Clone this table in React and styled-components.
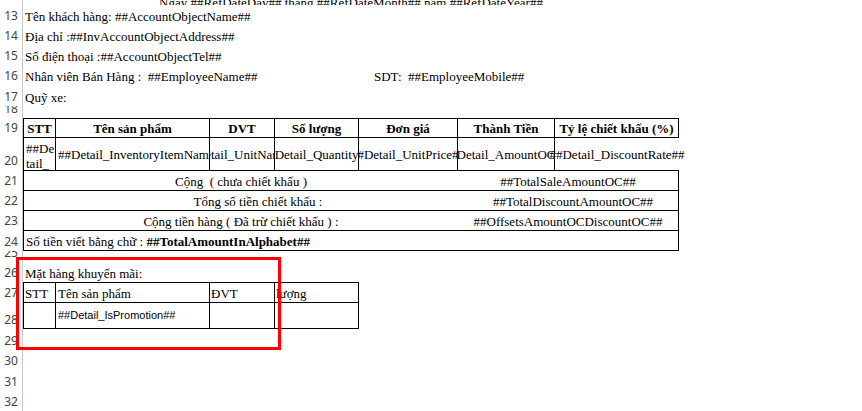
import styled, { createGlobalStyle } from 'styled-components';

const GlobalStyle = createGlobalStyle`
  html, body {
    margin: 0;
    padding: 0;
    background: #fff;
    overflow: hidden;
  }
  body {
    font-family: "Liberation Serif", "Times New Roman", serif;
    font-size: 13px;
    color: #000;
  }
`;

// row header + columns A..G + the rest of the sheet
const COLUMNS = '23px 33px 154px 65px 84px 99px 97px 124px 1fr';
const LINE = '1px solid #000';

const Sheet = styled.div`
  position: relative;
  width: 862px;
  height: 411px;
  overflow: hidden;
`;

const Row = styled.div`
  display: grid;
  grid-template-columns: ${COLUMNS};
  grid-template-rows: ${(p) => p.$h}px;
  height: ${(p) => p.$h}px;
`;

const RowHead = styled.div`
  grid-column: 1;
  display: flex;
  align-items: flex-end;
  justify-content: center;
  overflow: hidden;
  border-right: 1px solid #c8c8c8;
  padding-bottom: 1px;
  font-family: "Noto Sans", "DejaVu Sans", sans-serif;
  font-size: 12px;
  line-height: 16px;
  color: #444;
`;

const Cell = styled.div`
  grid-column: ${(p) => p.$col} / ${(p) => (p.$span ? `span ${p.$span}` : '-1')};
  display: flex;
  align-items: ${(p) => p.$v || 'flex-end'};
  justify-content: ${(p) => p.$align || 'flex-start'};
  box-sizing: border-box;
  min-width: 0;
  padding: 0 2px ${(p) => (p.$v === 'center' ? 0 : 1)}px ${(p) => p.$indent ?? 2}px;
  line-height: ${(p) => p.$lh || 15}px;
  white-space: pre;
  overflow: ${(p) => (p.$clip ? 'hidden' : 'visible')};
  font-weight: ${(p) => (p.$bold ? 700 : 400)};
  border-top: ${(p) => (p.$t ? LINE : 'none')};
  border-right: ${(p) => (p.$r ? LINE : 'none')};
  border-bottom: ${(p) => (p.$b ? LINE : 'none')};
  border-left: ${(p) => (p.$l ? LINE : 'none')};
`;

const TitleCell = styled(Cell)`
  padding-bottom: 0;
`;

// row 12 is scrolled almost out of view: only the foot of its text shows
const TitleText = styled.span`
  margin-bottom: -3px;
`;

const WrapCell = styled(Cell)`
  align-items: flex-start;
  padding-top: 3px;
  padding-right: 0;
  white-space: normal;
  word-break: break-all;
`;

const Sans = styled.span`
  font-family: "Liberation Sans", Arial, sans-serif;
  font-size: 11px;
`;

const Strong = styled.span`
  font-weight: 700;
`;

const Highlight = styled.div`
  position: absolute;
  left: 16px;
  top: 257px;
  width: 265px;
  height: 93px;
  box-sizing: border-box;
  border: 3px solid #ff0000;
  pointer-events: none;
`;

const headers = ['STT', 'Tên sản phẩm', 'DVT', 'Số lượng', 'Đơn giá', 'Thành Tiền', 'Tỷ lệ chiết khấu (%)'];

const details = [
  { text: '##Detail_InventoryItemName##', align: 'flex-start' },
  { text: '##Detail_UnitName##', align: 'center' },
  { text: '##Detail_Quantity##', align: 'center' },
  { text: '##Detail_UnitPrice##', align: 'center' },
  { text: '##Detail_AmountOC##', align: 'center' },
];

const totals = [
  { n: 21, label: 'Cộng  ( chưa chiết khấu )', value: '##TotalSaleAmountOC##' },
  { n: 22, label: 'Tổng số tiền chiết khấu :', value: '##TotalDiscountAmountOC##', shift: 36, vshift: 12 },
  { n: 23, label: 'Cộng tiền hàng ( Đã trừ chiết khấu ) :', value: '##OffsetsAmountOCDiscountOC##' },
];

const TextRow = ({ n, h = 20, children }) => (
  <Row $h={h}>
    <RowHead>{n}</RowHead>
    <Cell $col={2}>{children}</Cell>
  </Row>
);

export default function App() {
  return (
    <>
      <GlobalStyle />
      <Sheet>
        <Row $h={5}>
          <RowHead>12</RowHead>
          <TitleCell $col={2} $span={7} $align="center" $clip $lh={11}>
            <TitleText>Ngày ##RefDateDay## tháng ##RefDateMonth## năm ##RefDateYear##</TitleText>
          </TitleCell>
        </Row>
        <TextRow n={13}>Tên khách hàng: ##AccountObjectName##</TextRow>
        <TextRow n={14}>Địa chỉ :##InvAccountObjectAddress##</TextRow>
        <TextRow n={15}>Số điện thoại :##AccountObjectTel##</TextRow>
        <Row $h={20}>
          <RowHead>16</RowHead>
          <Cell $col={2} $span={4}>Nhân viên Bán Hàng :  ##EmployeeName##</Cell>
          <Cell $col={6} $indent={15}>SDT:  ##EmployeeMobile##</Cell>
        </Row>
        <TextRow n={17} h={21}>Quỹ xe:</TextRow>
        <Row $h={12}>
          <RowHead>18</RowHead>
        </Row>

        <Row $h={19}>
          <RowHead>19</RowHead>
          {headers.map((h, i) => (
            <Cell key={h} $col={i + 2} $span={1} $align="center" $v="center" $bold $clip $t $r $l={i === 0}>
              {h}
            </Cell>
          ))}
        </Row>
        <Row $h={33}>
          <RowHead>20</RowHead>
          <WrapCell $col={2} $span={1} $clip $t $r $l $lh={15}>
            ##Detail_SortOrder##
          </WrapCell>
          {details.map((d, i) => (
            <Cell key={d.text} $col={i + 3} $span={1} $align={d.align} $v="center" $clip $t $r>
              {d.text}
            </Cell>
          ))}
          <Cell $col={8} $span={1} $align="center" $v="center" $t>
            ##Detail_DiscountRate##
          </Cell>
        </Row>
        {totals.map((t) => (
          <Row key={t.n} $h={20}>
            <RowHead>{t.n}</RowHead>
            <Cell $col={2} $span={5} $align="center" $indent={t.shift || 2} $t $l>
              {t.label}
            </Cell>
            <Cell $col={7} $span={2} $align="center" $indent={t.vshift || 2} $t $r>
              {t.value}
            </Cell>
          </Row>
        ))}
        <Row $h={21}>
          <RowHead>24</RowHead>
          <Cell $col={2} $span={7} $t $r $b $l>
            Số tiền viết bằng chữ : <Strong>##TotalAmountInAlphabet##</Strong>
          </Cell>
        </Row>
        <Row $h={11}>
          <RowHead>25</RowHead>
        </Row>

        <TextRow n={26}>Mặt hàng khuyến mãi:</TextRow>
        <Row $h={20}>
          <RowHead>27</RowHead>
          <Cell $col={2} $span={1} $clip $t $r $l $indent={1}>STT</Cell>
          <Cell $col={3} $span={1} $clip $t $r>Tên sản phẩm</Cell>
          <Cell $col={4} $span={1} $clip $t $r $indent={1}>ĐVT</Cell>
          <Cell $col={5} $span={1} $clip $t $r $indent={1}>lượng</Cell>
        </Row>
        <Row $h={27}>
          <RowHead>28</RowHead>
          <Cell $col={2} $span={1} $t $r $b $l />
          <Cell $col={3} $span={1} $v="center" $clip $t $r $b>
            <Sans>##Detail_IsPromotion##</Sans>
          </Cell>
          <Cell $col={4} $span={1} $t $r $b />
          <Cell $col={5} $span={1} $t $r $b />
        </Row>
        <Row $h={21}>
          <RowHead>29</RowHead>
        </Row>
        <Row $h={20}>
          <RowHead>30</RowHead>
        </Row>
        <Row $h={21}>
          <RowHead>31</RowHead>
        </Row>
        <Row $h={20}>
          <RowHead>32</RowHead>
        </Row>
        <Highlight />
      </Sheet>
    </>
  );
}
